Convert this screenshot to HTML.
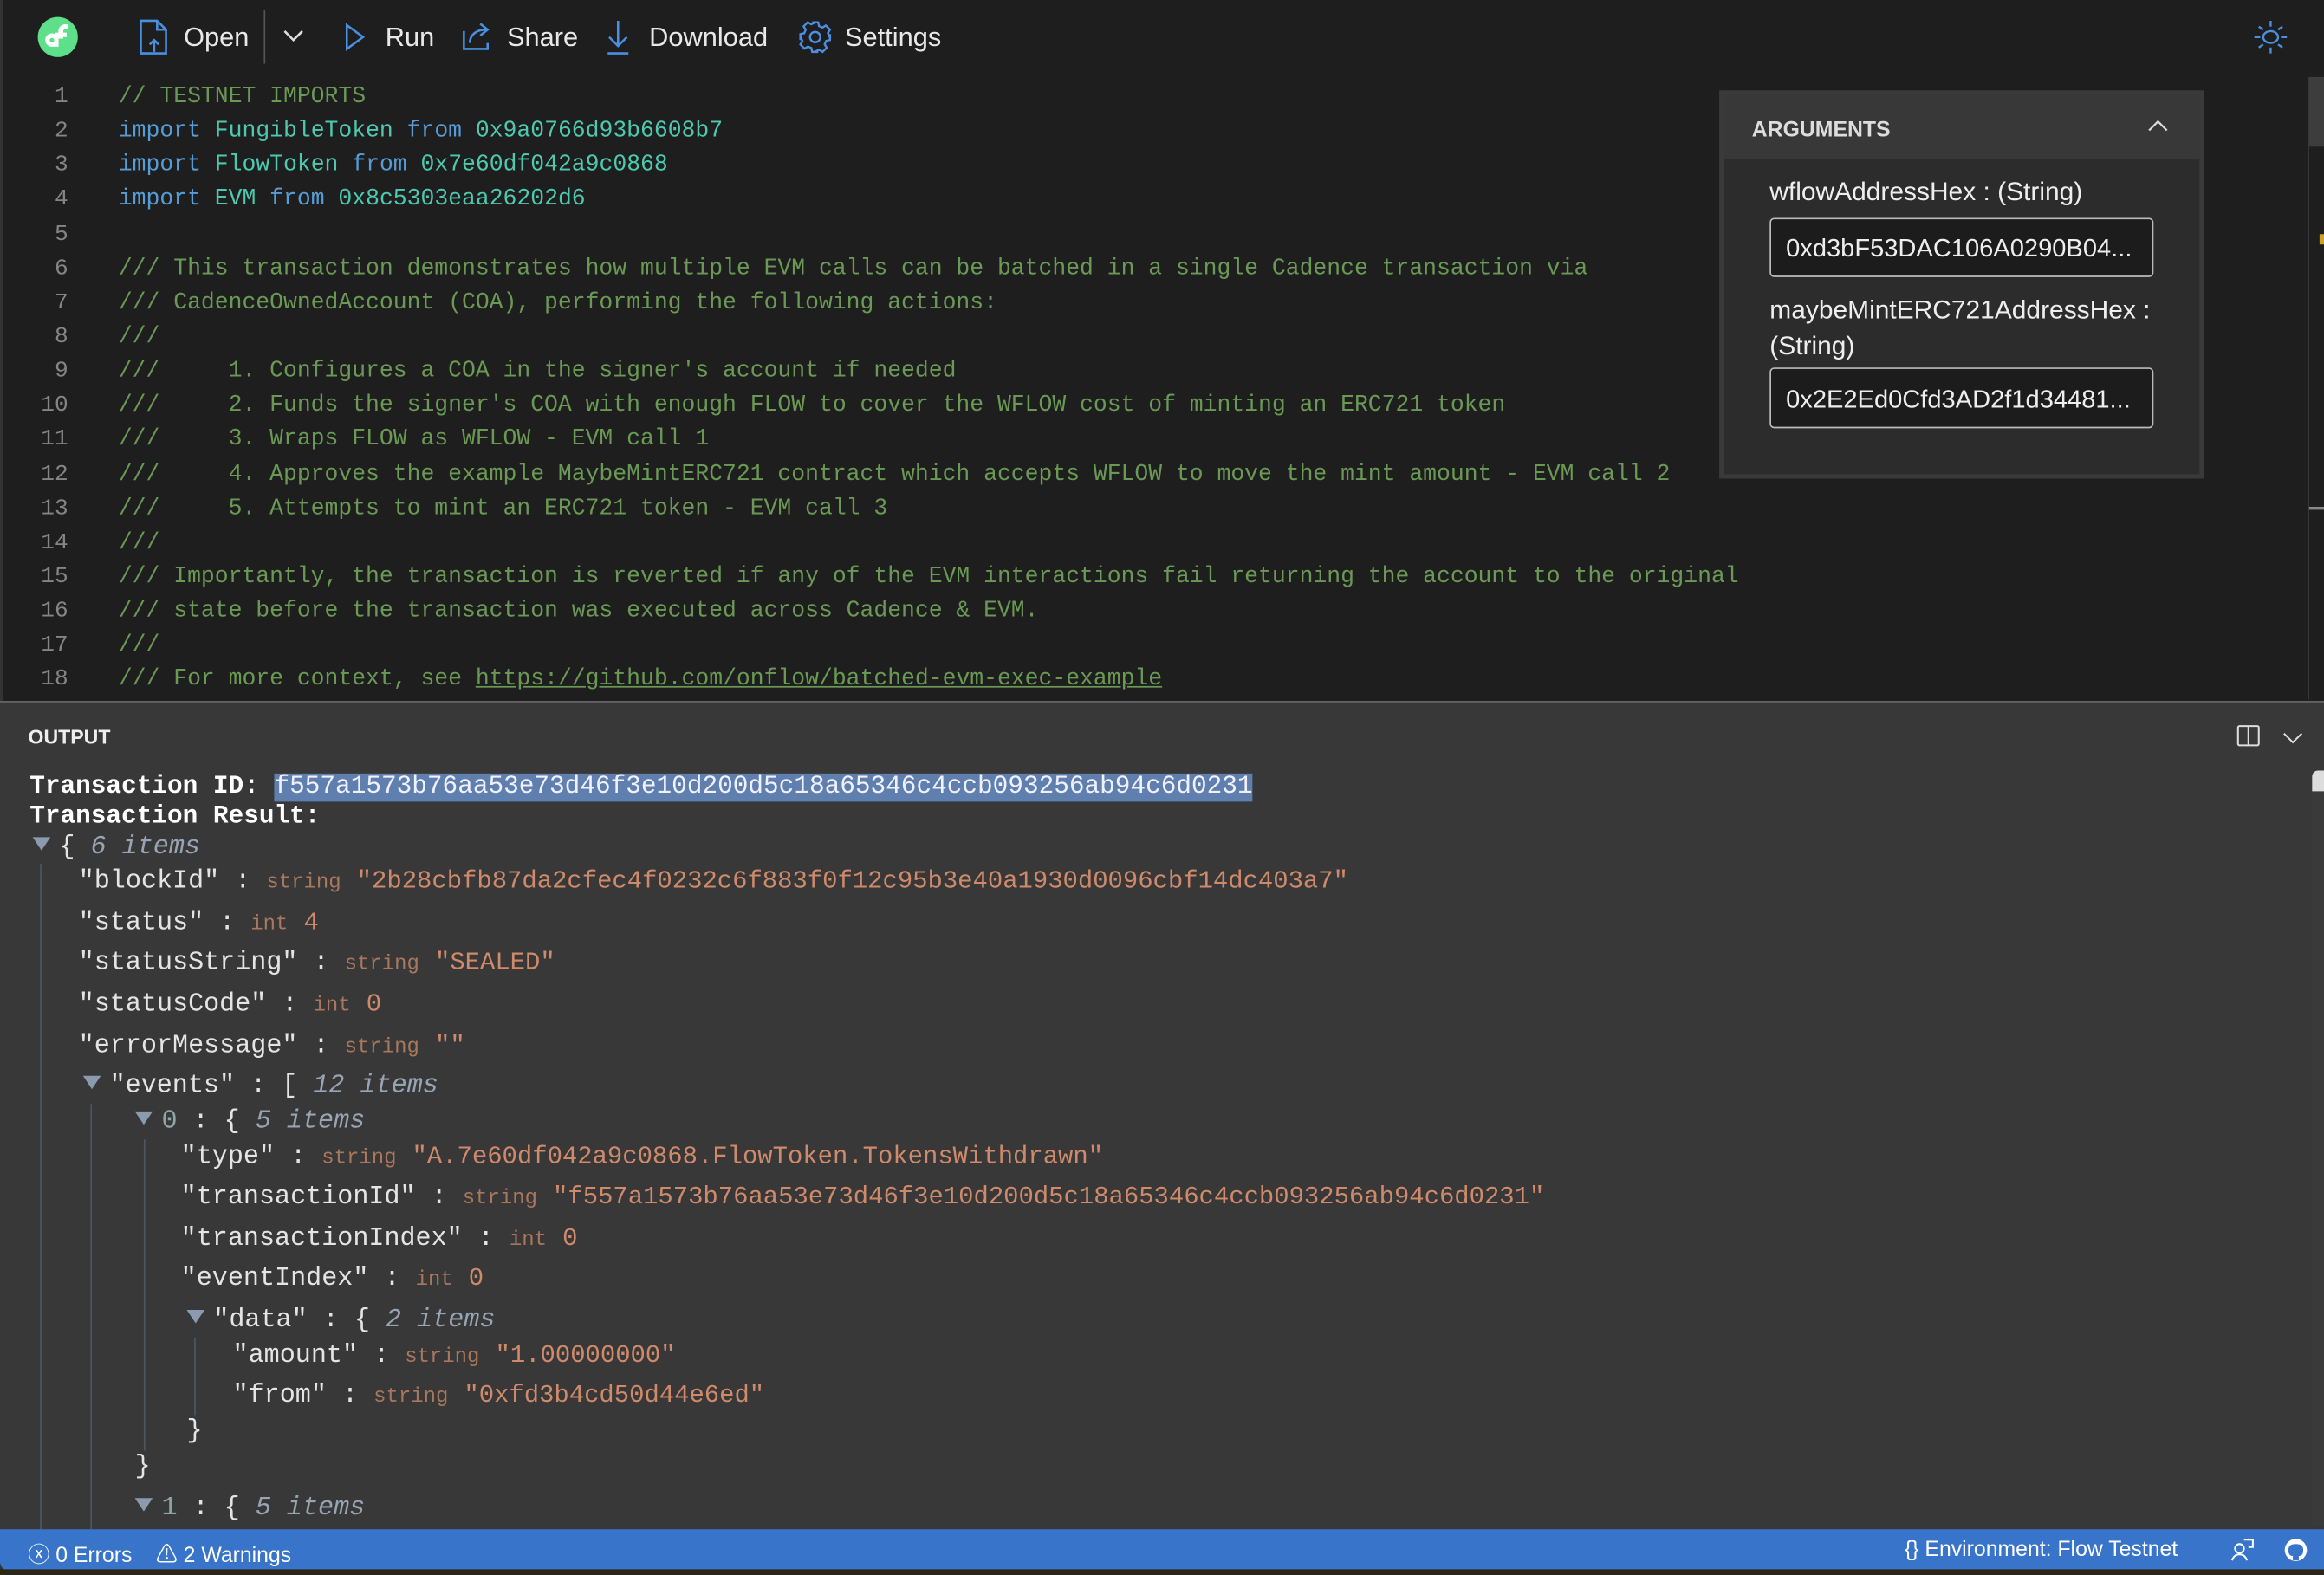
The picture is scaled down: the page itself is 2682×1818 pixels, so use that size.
<!DOCTYPE html>
<html><head><meta charset="utf-8"><style>
*{margin:0;padding:0;box-sizing:border-box}
html,body{width:2682px;height:1818px;overflow:hidden;background:#1e1e1e}
#w{position:absolute;left:0;top:0;width:1568px;height:1063px;transform:scale(1.71046);transform-origin:0 0;background:#1e1e1e;font-family:"Liberation Sans",sans-serif;color:#fff}
.a{position:absolute;white-space:pre}
.tb{font-size:18px;color:#e8e8e8;top:14px}
.ln{font-family:"Liberation Mono",monospace;font-size:15.3px;color:#858585;width:46px;text-align:right;left:0}
.cd{font-family:"Liberation Mono",monospace;font-size:15.45px;left:80px;color:#6a9955}
.k{color:#569cd6}.t{color:#4ec9b0}
.o{font-family:"Liberation Mono",monospace;font-size:17.6px;color:#e4e4e4}
.ty{font-size:14px;color:#a8775d}
.v{color:#ce8a6a;font-size:16.9px}
.it{color:#98a4b4;font-style:italic}
.tri{display:inline-block;width:0;height:0;border-left:6px solid transparent;border-right:6px solid transparent;border-top:9px solid #8a9bb0;margin-right:6px;vertical-align:2px}
.g{position:absolute;width:1px;background:#4d5563}
#out{position:absolute;left:0;top:3px;width:1568px;height:1px}
</style></head><body><div id="w">
<div class="a" style="left:0;top:0;width:2px;height:1063px;background:#333"></div>
<svg class="a" style="left:25px;top:11px" width="28" height="28" viewBox="0 0 28 28"><circle cx="14" cy="14" r="13.5" fill="#5ee08b"/><path d="M10 19 a3 3 0 1 1 3-3 v3z" fill="none" stroke="#fff" stroke-width="3"/><rect x="12" y="11" width="4" height="4" fill="#fff"/><path d="M16 15 V10 a3 3 0 0 1 3-3 h2" fill="none" stroke="#fff" stroke-width="3.2"/><rect x="16" y="11" width="4" height="3" fill="#fff"/></svg>
<svg class="a" style="left:93px;top:13px" width="22" height="24" viewBox="0 0 22 24" fill="none" stroke="#4a8fe0" stroke-width="1.5"><path d="M2 1h11l6 6v16H2z M13 1v6h6"/><path d="M11 22v-8 M8 17l3-3 3 3"/></svg>
<div class="a tb" style="left:124px;top:15px">Open</div>
<div class="a" style="left:178px;top:7px;width:1px;height:36px;background:#555"></div>
<svg class="a" style="left:190px;top:18px" width="16" height="12"><path d="M2 3l6 6 6-6" stroke="#ddd" stroke-width="1.5" fill="none"/></svg>
<svg class="a" style="left:232px;top:15px" width="16" height="20"><path d="M2 2l11 8-11 8z" stroke="#4a8fe0" stroke-width="1.5" fill="none"/></svg>
<div class="a tb" style="left:260px;top:15px">Run</div>
<svg class="a" style="left:311px;top:13px" width="22" height="22" fill="none" stroke="#4a8fe0" stroke-width="1.5"><path d="M2 8v12h16v-4"/><path d="M6 16c0-6 5-9 11-9 M13 3l5 4-5 4"/></svg>
<div class="a tb" style="left:342px;top:15px">Share</div>
<svg class="a" style="left:408px;top:13px" width="18" height="24" fill="none" stroke="#4a8fe0" stroke-width="1.5"><path d="M9 1v17 M3 12l6 6 6-6 M2 23h14"/></svg>
<div class="a tb" style="left:438px;top:15px">Download</div>
<svg class="a" style="left:539px;top:14px" width="22" height="22" viewBox="0 0 22 22" fill="none" stroke="#4a8fe0" stroke-width="1.4"><circle cx="11" cy="11" r="3.5"/><path d="M9 1h4l.6 2.6 2.3 1 2.3-1.4 2.8 2.8-1.4 2.3 1 2.3L21 9v4l-2.6.6-1 2.3 1.4 2.3-2.8 2.8-2.3-1.4-2.3 1L13 21H9l-.6-2.6-2.3-1-2.3 1.4-2.8-2.8 1.4-2.3-1-2.3L1 13V9l2.6-.6 1-2.3L3.2 3.8 6 1l2.3 1.4 2.3-1z"/></svg>
<div class="a tb" style="left:570px;top:15px">Settings</div>
<svg class="a" style="left:1520px;top:13px" width="24" height="24" fill="none" stroke="#4a8fe0" stroke-width="1.4"><ellipse cx="12" cy="12" rx="5" ry="4"/><path d="M12 1v4M12 19v4M1 12h4M19 12h4M4 5l3 2M20 5l-3 2M4 19l3-2M20 19l-3-2"/></svg>

<div class="a ln" style="top:56px">1</div><div class="a cd" style="top:56px">// TESTNET IMPORTS</div>
<div class="a ln" style="top:79px">2</div><div class="a cd" style="top:79px"><span class="k">import</span> <span class="t">FungibleToken</span> <span class="k">from</span> <span class="t">0x9a0766d93b6608b7</span></div>
<div class="a ln" style="top:102px">3</div><div class="a cd" style="top:102px"><span class="k">import</span> <span class="t">FlowToken</span> <span class="k">from</span> <span class="t">0x7e60df042a9c0868</span></div>
<div class="a ln" style="top:125px">4</div><div class="a cd" style="top:125px"><span class="k">import</span> <span class="t">EVM</span> <span class="k">from</span> <span class="t">0x8c5303eaa26202d6</span></div>
<div class="a ln" style="top:149px">5</div>
<div class="a ln" style="top:172px">6</div><div class="a cd" style="top:172px">/// This transaction demonstrates how multiple EVM calls can be batched in a single Cadence transaction via</div>
<div class="a ln" style="top:195px">7</div><div class="a cd" style="top:195px">/// CadenceOwnedAccount (COA), performing the following actions:</div>
<div class="a ln" style="top:218px">8</div><div class="a cd" style="top:218px">///</div>
<div class="a ln" style="top:241px">9</div><div class="a cd" style="top:241px">///     1. Configures a COA in the signer's account if needed</div>
<div class="a ln" style="top:264px">10</div><div class="a cd" style="top:264px">///     2. Funds the signer's COA with enough FLOW to cover the WFLOW cost of minting an ERC721 token</div>
<div class="a ln" style="top:287px">11</div><div class="a cd" style="top:287px">///     3. Wraps FLOW as WFLOW - EVM call 1</div>
<div class="a ln" style="top:311px">12</div><div class="a cd" style="top:311px">///     4. Approves the example MaybeMintERC721 contract which accepts WFLOW to move the mint amount - EVM call 2</div>
<div class="a ln" style="top:334px">13</div><div class="a cd" style="top:334px">///     5. Attempts to mint an ERC721 token - EVM call 3</div>
<div class="a ln" style="top:357px">14</div><div class="a cd" style="top:357px">///</div>
<div class="a ln" style="top:380px">15</div><div class="a cd" style="top:380px">/// Importantly, the transaction is reverted if any of the EVM interactions fail returning the account to the original</div>
<div class="a ln" style="top:403px">16</div><div class="a cd" style="top:403px">/// state before the transaction was executed across Cadence &amp; EVM.</div>
<div class="a ln" style="top:426px">17</div><div class="a cd" style="top:426px">///</div>
<div class="a ln" style="top:449px">18</div><div class="a cd" style="top:449px">/// For more context, see <span style="text-decoration:underline">https://github.com/onflow/batched-evm-exec-example</span></div>

<div class="a" style="left:1160px;top:61px;width:327px;height:262px;background:#2c2c2c;border:3px solid #3a3a3a"></div>
<div class="a" style="left:1163px;top:64px;width:321px;height:43px;background:#383838"></div>
<div class="a" style="left:1182px;top:80px;font-size:14.5px;font-weight:bold;color:#ddd">ARGUMENTS</div>
<svg class="a" style="left:1449px;top:80px" width="14" height="10"><path d="M1 8l6-6 6 6" stroke="#ddd" stroke-width="1.3" fill="none"/></svg>
<div class="a" style="left:1194px;top:119px;font-size:17.5px;color:#eee">wflowAddressHex : (String)</div>
<div class="a" style="left:1194px;top:147px;width:259px;height:40px;background:#1c1c1c;border:1.5px solid #bbb;border-radius:3px;font-size:17px;color:#eee;padding:10px 10px">0xd3bF53DAC106A0290B04...</div>
<div class="a" style="left:1194px;top:197px;font-size:17.5px;color:#eee;line-height:24px">maybeMintERC721AddressHex :<br>(String)</div>
<div class="a" style="left:1194px;top:248px;width:259px;height:41px;background:#1c1c1c;border:1.5px solid #bbb;border-radius:3px;font-size:17px;color:#eee;padding:11px 10px">0x2E2Ed0Cfd3AD2f1d34481...</div>
<div class="a" style="left:1557px;top:52px;width:1px;height:420px;background:#3a3a3a"></div>
<div class="a" style="left:1558px;top:52px;width:10px;height:47px;background:#3d3d3d"></div>
<div class="a" style="left:1565px;top:158px;width:3px;height:7px;background:#c9a227"></div>
<div class="a" style="left:1558px;top:342px;width:10px;height:2px;background:#888"></div>

<div class="a" style="left:0;top:473px;width:1568px;height:560px;background:#383838;border-top:1px solid #666"></div>
<div class="a" style="left:19px;top:490px;font-size:13.5px;font-weight:bold;color:#eee">OUTPUT</div>
<svg class="a" style="left:1509px;top:489px" width="16" height="15" fill="none" stroke="#ddd" stroke-width="1.2"><rect x="1" y="1" width="14" height="13" rx="1"/><path d="M8 1v13"/></svg>
<svg class="a" style="left:1540px;top:493px" width="14" height="10"><path d="M1 2l6 6 6-6" stroke="#ddd" stroke-width="1.2" fill="none"/></svg>
<div class="a" style="left:1560px;top:520px;width:8px;height:510px;background:#3a3a3a"></div>
<div class="a" style="left:1560px;top:520px;width:8px;height:14px;background:#ddd;border-radius:4px 0 0 0"></div>

<div id="out">
<div class="a o" style="left:20px;top:519px;font-weight:bold;color:#fff;font-size:17.2px">Transaction ID: <span style="background:#5f7fae;font-weight:normal;color:#f0f0ff">f557a1573b76aa53e73d46f3e10d200d5c18a65346c4ccb093256ab94c6d0231</span></div>
<div class="a o" style="left:20px;top:539px;font-weight:bold;color:#fff;font-size:17.2px">Transaction Result:</div>
<div class="a o" style="left:22px;top:559px"><span class="tri"></span>{ <span class="it">6 items</span></div>
<div class="g" style="left:27px;top:580px;height:450px"></div>
<div class="a o" style="left:53px;top:582px">"blockId" : <span class="ty">string</span> <span class="v">"2b28cbfb87da2cfec4f0232c6f883f0f12c95b3e40a1930d0096cbf14dc403a7"</span></div>
<div class="a o" style="left:53px;top:610px">"status" : <span class="ty">int</span> <span class="v">4</span></div>
<div class="a o" style="left:53px;top:637px">"statusString" : <span class="ty">string</span> <span class="v">"SEALED"</span></div>
<div class="a o" style="left:53px;top:665px">"statusCode" : <span class="ty">int</span> <span class="v">0</span></div>
<div class="a o" style="left:53px;top:693px">"errorMessage" : <span class="ty">string</span> <span class="v">""</span></div>
<div class="a o" style="left:56px;top:720px"><span class="tri"></span>"events" : [ <span class="it">12 items</span></div>
<div class="g" style="left:61px;top:742px;height:290px"></div>
<div class="a o" style="left:91px;top:744px"><span class="tri"></span><span style="color:#8fa5a5">0</span> : { <span class="it">5 items</span></div>
<div class="g" style="left:97px;top:766px;height:210px"></div>
<div class="a o" style="left:122px;top:768px">"type" : <span class="ty">string</span> <span class="v">"A.7e60df042a9c0868.FlowToken.TokensWithdrawn"</span></div>
<div class="a o" style="left:122px;top:795px">"transactionId" : <span class="ty">string</span> <span class="v">"f557a1573b76aa53e73d46f3e10d200d5c18a65346c4ccb093256ab94c6d0231"</span></div>
<div class="a o" style="left:122px;top:823px">"transactionIndex" : <span class="ty">int</span> <span class="v">0</span></div>
<div class="a o" style="left:122px;top:850px">"eventIndex" : <span class="ty">int</span> <span class="v">0</span></div>
<div class="a o" style="left:126px;top:878px"><span class="tri"></span>"data" : { <span class="it">2 items</span></div>
<div class="g" style="left:131px;top:900px;height:52px"></div>
<div class="a o" style="left:157px;top:902px">"amount" : <span class="ty">string</span> <span class="v">"1.00000000"</span></div>
<div class="a o" style="left:157px;top:929px">"from" : <span class="ty">string</span> <span class="v">"0xfd3b4cd50d44e6ed"</span></div>
<div class="a o" style="left:126px;top:953px">}</div>
<div class="a o" style="left:91px;top:977px">}</div>
<div class="a o" style="left:91px;top:1005px"><span class="tri"></span><span style="color:#8fa5a5">1</span> : { <span class="it">5 items</span></div>
</div>

<div class="a" style="left:0;top:1032px;width:1568px;height:28px;background:#3874c9;border-radius:0 0 0 6px"></div>
<div class="a" style="left:0;top:1059px;width:1568px;height:4px;background:#2a2618"></div>
<div class="a" style="left:19px;top:1038px;font-size:14.5px;color:#fff">ⓧ 0 Errors&nbsp;&nbsp;&nbsp; ⚠ 2 Warnings</div>
<div class="a" style="left:1285px;top:1038px;font-size:14.5px;color:#fff">{} Environment: Flow Testnet</div>
<svg class="a" style="left:1505px;top:1038px" width="16" height="16" fill="none" stroke="#fff" stroke-width="1.2"><circle cx="6" cy="7" r="3"/><path d="M1 15c1-3 3-4 5-4s4 1 5 4M9 1h6v5h-3"/></svg>
<svg class="a" style="left:1541px;top:1038px" width="16" height="16"><circle cx="8" cy="8" r="7.5" fill="#fff"/><path d="M6 15v-3c-2 0-3-1-3-4s2-4 5-4 5 1 5 4-1 4-3 4v3z" fill="#3874c9"/></svg>
</div></body></html>
